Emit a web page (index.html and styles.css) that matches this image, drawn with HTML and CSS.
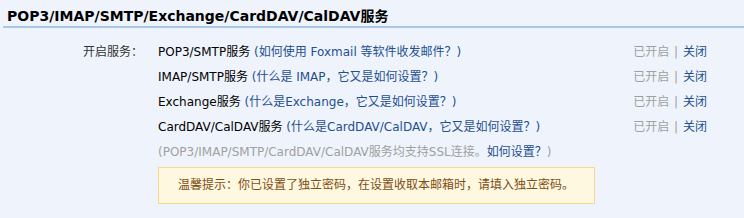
FILE: index.html
```html
<!DOCTYPE html>
<html lang="zh-CN">
<head>
    <meta charset="UTF-8">
    <title>账户设置</title>
    <link rel="stylesheet" href="styles.css">
</head>
<body>
    <div class="section">
        <h2 class="section-title">POP3/IMAP/SMTP/Exchange/CardDAV/CalDAV服务</h2>

        <div class="service-list">
            <div class="service-label">开启服务：</div>
            <div class="service-rows">
                <div class="service-row">
                    <span class="service-name">POP3/SMTP服务 <a href="#">(如何使用 Foxmail 等软件收发邮件？)</a></span>
                    <span class="service-state">已开启 <i>|</i> <a href="#">关闭</a></span>
                </div>
                <div class="service-row">
                    <span class="service-name">IMAP/SMTP服务 <a href="#">(什么是 IMAP，它又是如何设置？)</a></span>
                    <span class="service-state">已开启 <i>|</i> <a href="#">关闭</a></span>
                </div>
                <div class="service-row">
                    <span class="service-name">Exchange服务 <a href="#">(什么是Exchange，它又是如何设置？)</a></span>
                    <span class="service-state">已开启 <i>|</i> <a href="#">关闭</a></span>
                </div>
                <div class="service-row">
                    <span class="service-name">CardDAV/CalDAV服务 <a href="#">(什么是CardDAV/CalDAV，它又是如何设置？)</a></span>
                    <span class="service-state">已开启 <i>|</i> <a href="#">关闭</a></span>
                </div>
                <p class="note">(POP3/IMAP/SMTP/CardDAV/CalDAV服务均支持SSL连接。<a href="#">如何设置？</a>)</p>
                <div class="tip">温馨提示：你已设置了独立密码，在设置收取本邮箱时，请填入独立密码。</div>
            </div>
        </div>
    </div>
</body>
</html>
```

FILE: styles.css
```css
:root {
    --bg: #eff4fc;
    --line: #a8c8ea;
    --text: #000000;
    --label: #333333;
    --link: #1e4f8f;
    --muted: #a0a0a0;
    --tip-bg: #fff8e1;
    --tip-border: #f8d98a;
    --tip-text: #7d4d12;
    --font-family: "DejaVu Sans", Verdana, "Noto Sans CJK SC", sans-serif;
}

* {
    margin: 0;
    padding: 0;
    box-sizing: border-box;
}

body {
    background: var(--bg);
    font-family: var(--font-family);
    font-size: 12px;
    color: var(--text);
}

a {
    color: var(--link);
    text-decoration: none;
}

.section-title {
    margin-left: 3px;
    padding: 5px 0 0 4px;
    height: 28px;
    font-size: 14px;
    font-weight: bold;
    color: #000;
    border-bottom: 2px solid var(--line);
}

.service-list {
    display: flex;
    padding: 12px 37px 0 83px;
}

.service-label {
    width: 75px;
    line-height: 25px;
    color: var(--label);
}

.service-rows {
    flex: 1;
}

.service-row {
    display: flex;
    justify-content: space-between;
    line-height: 25px;
}

.service-state {
    color: var(--muted);
}

.service-state i {
    font-style: normal;
    margin: 0 1px;
}

.note {
    line-height: 25px;
    color: var(--muted);
}

.tip {
    width: 437px;
    height: 37px;
    margin-top: 2px;
    padding-left: 19px;
    line-height: 35px;
    background: var(--tip-bg);
    border: 1px solid var(--tip-border);
    color: var(--tip-text);
}
```
